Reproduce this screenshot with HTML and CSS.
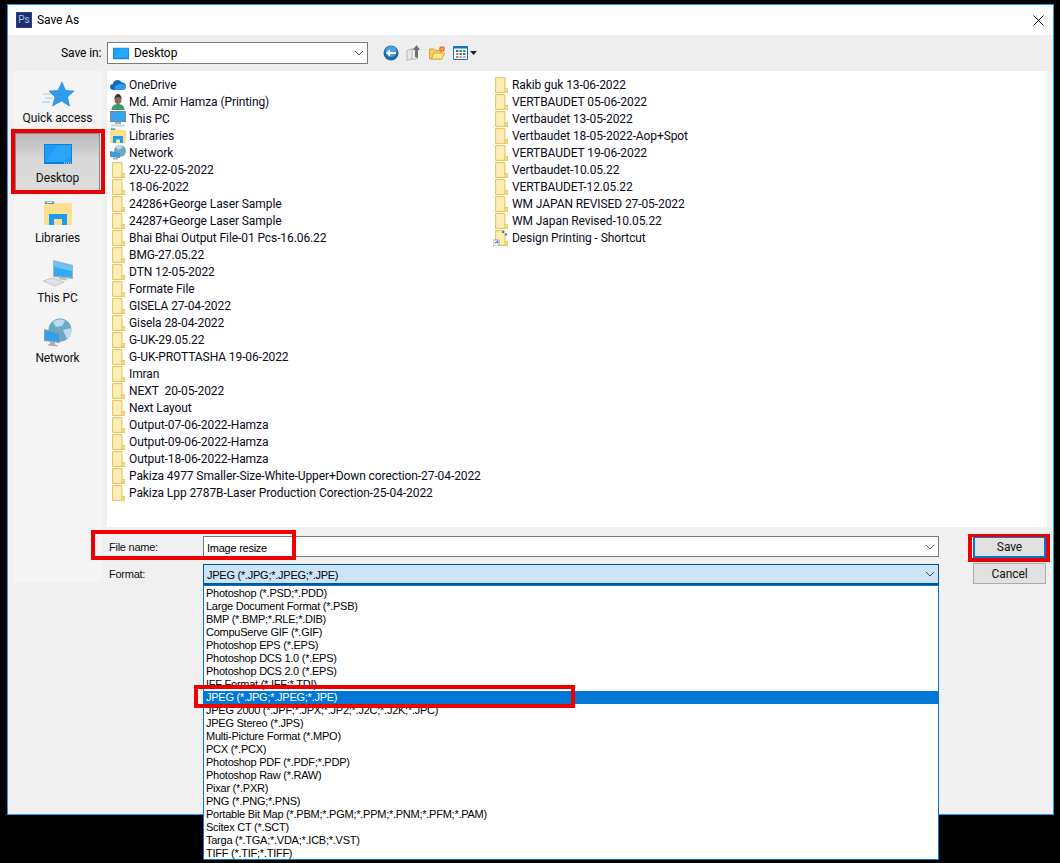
FILE: index.html
```html
<!DOCTYPE html>
<html lang="en">
<head>
<meta charset="utf-8">
<title>Save As</title>
<link rel="stylesheet" href="styles.css">
</head>
<body>
<svg class="defs" width="0" height="0" aria-hidden="true">
  <symbol id="folder" viewBox="0 0 16 16">
    <path d="M2.500.5h9.500v15H2.500z" fill="#fde08f" stroke="#e9c766"/>
    <path d="M3.500 1.500h7.500v13H3.500z" fill="#fdeeb8"/>
    <path d="M12 11.500h2.500v4H12z" fill="#fde08f" stroke="#e9c766"/>
  </symbol>
  <symbol id="monitor" viewBox="0 0 28 20">
    <path d="M0 0h28v20H0z" fill="#0f7fd8"/>
    <path d="M1 1h26v17H1z" fill="#1e9bf5"/>
    <path d="M14 1h13v12L17 18H1z" fill="#35aafa" opacity=".6"/>
    <path d="M20 18.600h1v.8h-1zM22 18.600h1v.8h-1zM24 18.600h1v.8h-1zM26 18.600h1v.8h-1z" fill="#fff"/>
  </symbol>
</svg>
<main class="window">
  <header class="titlebar">
    <span class="ps-logo">Ps</span>
    <span class="title">Save As</span>
    <svg class="close" width="11" height="11" viewBox="0 0 11 11"><path d="M.5.5l10 10M10.500.5l-10 10" stroke="#000" stroke-width="1" fill="none"/></svg>
  </header>

  <div class="toolbar">
    <span class="savein-label">Save in:</span>
    <div class="combo savein">
      <svg class="combo-icon" width="16" height="13"><use href="#monitor"/></svg>
      <span class="combo-text">Desktop</span>
      <svg class="chev" width="10" height="6" viewBox="0 0 10 6"><path d="M1 1l4 4 4-4" fill="none" stroke="#555" stroke-width="1"/></svg>
    </div>
    <div class="tools">
      <svg width="16" height="16" viewBox="0 0 16 16"><circle cx="8" cy="8" r="7.500" fill="#1c6aa8"/><circle cx="8" cy="6.500" r="5.500" fill="#4aa3df"/><path d="M3 8l4-3.500V7h6v2H7v2.500z" fill="#fff"/></svg>
      <svg width="16" height="18" viewBox="0 0 16 18"><path d="M1 6.500l6-2v10l-6 2z" fill="#e8e8e8" stroke="#b5b5b5"/><path d="M6 5h5v10H6z" fill="#eee" stroke="#b5b5b5"/><path d="M9 13V6H7l3.500-5L14 6h-2v8z" fill="#6f6f6f"/></svg>
      <svg width="17" height="14" viewBox="0 0 17 14"><path d="M.5 3h5l1 1.500h6v8.500H.5z" fill="#f3cf62" stroke="#d9a92f"/><path d="M2.500 13l2-6h11l-2.500 6z" fill="#fde68f" stroke="#d9a92f"/><circle cx="13" cy="3" r="2.800" fill="#ef5a2a"/><path d="M13 .5v5M10.500 3h5" stroke="#ffd27a" stroke-width=".8"/></svg>
      <svg class="views" width="15" height="14" viewBox="0 0 15 14"><path d="M.5.5h14v13H.5z" fill="#fff" stroke="#1a6fc4"/><path d="M.5.5h14v2H.5z" fill="#1a6fc4"/><path d="M3 4h2.500v2H3z" fill="#1a6fc4"/><path d="M6.500 4H9v2H6.500z" fill="#3a9a4a"/><path d="M10 4h2.500v2H10z" fill="#3a9a4a"/><path d="M3 7h2.500v2H3z" fill="#e07b2a"/><path d="M6.500 7H9v2H6.500z" fill="#6d7ea8"/><path d="M10 7h2.500v2H10z" fill="#2f7fc4"/><path d="M3 10h2.500v2H3z" fill="#e07b2a"/><path d="M6.500 10H9v2H6.500z" fill="#9aa7bf"/><path d="M10 10h2.500v2H10z" fill="#e0a52a"/></svg>
      <svg class="views-arrow" width="7" height="4" viewBox="0 0 7 4"><path d="M0 0h7L3.500 4z" fill="#222"/></svg>
    </div>
  </div>

  <div class="main">
    <nav class="sidebar">
      <div class="place">
        <svg class="place-icon" width="32" height="26" viewBox="0 0 32 26"><path d="M1 13h8M3 17h7M0 21h8" stroke="#8cc8f5" stroke-width="1.200"/><path d="M20 1l3.500 8.500 8.500.5-6.500 6 2 9-8-5-9 5 2.500-9-6-6 9-.5z" fill="#2d9cf0" stroke="#1b7fd0" stroke-width=".6"/></svg>
        <span>Quick access</span>
      </div>
      <div class="place is-current">
        <svg class="place-icon" width="28" height="20"><use href="#monitor"/></svg>
        <span>Desktop</span>
      </div>
      <div class="place">
        <svg class="place-icon place-icon-lib" width="28" height="25" viewBox="0 0 28 25"><path d="M0 1h10l2 2h16v22H0z" fill="#fde08f"/><path d="M1 1.500h9v2.500H1z" fill="#4aa3df"/><path d="M3 2h5v1H3z" fill="#fff"/><path d="M5 25V14h18v11h-5v-6h-8v6z" fill="#1e9bf5"/></svg>
        <span>Libraries</span>
      </div>
      <div class="place">
        <svg class="place-icon" width="32" height="28" viewBox="0 0 32 28"><path d="M11 1l20 5v14l-20-2z" fill="#9fb4c4"/><path d="M12 2.500l18 4.500v11.500l-18-1.800z" fill="#38a8f0"/><path d="M12 2.500l18 4.500v5L12 8z" fill="#6cc3f7"/><path d="M17 18.500l8 1v2l-8-1z" fill="#b8c2ca"/><path d="M1 22l9-3 12 4-9 4z" fill="#dfe3e6" stroke="#aab2b8" stroke-width=".6"/></svg>
        <span>This PC</span>
      </div>
      <div class="place">
        <svg class="place-icon" width="29" height="29" viewBox="0 0 29 29"><circle cx="17" cy="12" r="11.500" fill="#6ba9c9"/><path d="M10 4c4-3 9-3 12-1l-3 5-6 1zM20 12l8-2c1 5-1 9-4 11z" fill="#bcdcea"/><path d="M1 11l16 4v10l-16-2z" fill="#8d9aa5"/><path d="M2 12.500l14 3.500v7.500l-14-1.600z" fill="#2f9fee"/><path d="M7 24l5 .6v2l3 1v1l-10-1v-1l2-.5z" fill="#a4adb5"/></svg>
        <span>Network</span>
      </div>
    </nav>

    <div class="files">
      <ul class="col">
        <li><svg class="fi" width="16" height="11" viewBox="0 0 16 11"><path d="M3.500 11C1.500 11 0 9.700 0 8s1.200-2.800 2.800-3C3.400 2.600 5.400 1 7.700 1c1.800 0 3.300 1 4.100 2.500 2.300 0 4.200 1.700 4.200 3.900 0 2-1.500 3.600-3.600 3.600z" fill="#0f6cbd"/><path d="M5 11c-1.200-1.600-.3-4 2-4.500C8 5 9.700 4.300 11.500 5c2 0 4.500 1 4.500 3 0 2-1.500 3-3.600 3z" fill="#2f9cf0"/></svg>OneDrive</li>
        <li><svg class="fi" width="15" height="16" viewBox="0 0 15 16"><path d="M1 16c0-4 3-6 6.500-6s6.500 2 6.500 6z" fill="#3f9a6b"/><ellipse cx="7.500" cy="5.500" rx="3.500" ry="4.500" fill="#8a6a55"/><path d="M4 5c0-3 1.500-5 3.500-5S11 2 11 5c-1-1.500-2-2-3.500-2S5 3.500 4 5z" fill="#3a2f2a"/></svg>Md. Amir Hamza (Printing)</li>
        <li><svg class="fi" width="16" height="16" viewBox="0 0 16 16"><path d="M0 0h16v11H0z" fill="#6f8ba0"/><path d="M1 1h14v9H1z" fill="#3aa5ee"/><path d="M5 11h6v2H5z" fill="#9fb0bc"/><path d="M1 13.500h14v2H1z" fill="#c9d1d6"/></svg>This PC</li>
        <li><svg class="fi" width="16" height="15" viewBox="0 0 16 15"><path d="M0 0h6l1 2h9v13H0z" fill="#fde08f"/><path d="M1 .5h4V2H1z" fill="#2f9cf0"/><path d="M3 15V8h10v7h-3v-3.500H6V15z" fill="#1e9bf5"/></svg>Libraries</li>
        <li><svg class="fi" width="16" height="15" viewBox="0 0 16 15"><circle cx="10" cy="6" r="6" fill="#6ba9c9"/><path d="M6 2c2-2 5-2 7-1l-2 3-3 .5z" fill="#bcdcea"/><path d="M0 6l10 2v5l-10-1z" fill="#6f8ba0"/><path d="M1 7l8 1.800v3.400l-8-1z" fill="#2f9fee"/><path d="M3 13h5v1.500H3z" fill="#9fb0bc"/></svg>Network</li>
        <li><svg class="fi" width="16" height="16"><use href="#folder"/></svg>2XU-22-05-2022</li>
        <li><svg class="fi" width="16" height="16"><use href="#folder"/></svg>18-06-2022</li>
        <li><svg class="fi" width="16" height="16"><use href="#folder"/></svg>24286+George Laser Sample</li>
        <li><svg class="fi" width="16" height="16"><use href="#folder"/></svg>24287+George Laser Sample</li>
        <li><svg class="fi" width="16" height="16"><use href="#folder"/></svg>Bhai Bhai Output File-01 Pcs-16.06.22</li>
        <li><svg class="fi" width="16" height="16"><use href="#folder"/></svg>BMG-27.05.22</li>
        <li><svg class="fi" width="16" height="16"><use href="#folder"/></svg>DTN 12-05-2022</li>
        <li><svg class="fi" width="16" height="16"><use href="#folder"/></svg>Formate File</li>
        <li><svg class="fi" width="16" height="16"><use href="#folder"/></svg>GISELA 27-04-2022</li>
        <li><svg class="fi" width="16" height="16"><use href="#folder"/></svg>Gisela 28-04-2022</li>
        <li><svg class="fi" width="16" height="16"><use href="#folder"/></svg>G-UK-29.05.22</li>
        <li><svg class="fi" width="16" height="16"><use href="#folder"/></svg>G-UK-PROTTASHA 19-06-2022</li>
        <li><svg class="fi" width="16" height="16"><use href="#folder"/></svg>Imran</li>
        <li><svg class="fi" width="16" height="16"><use href="#folder"/></svg>NEXT&nbsp; 20-05-2022</li>
        <li><svg class="fi" width="16" height="16"><use href="#folder"/></svg>Next Layout</li>
        <li><svg class="fi" width="16" height="16"><use href="#folder"/></svg>Output-07-06-2022-Hamza</li>
        <li><svg class="fi" width="16" height="16"><use href="#folder"/></svg>Output-09-06-2022-Hamza</li>
        <li><svg class="fi" width="16" height="16"><use href="#folder"/></svg>Output-18-06-2022-Hamza</li>
        <li><svg class="fi" width="16" height="16"><use href="#folder"/></svg>Pakiza 4977 Smaller-Size-White-Upper+Down corection-27-04-2022</li>
        <li><svg class="fi" width="16" height="16"><use href="#folder"/></svg>Pakiza Lpp 2787B-Laser Production Corection-25-04-2022</li>
      </ul>
      <ul class="col">
        <li><svg class="fi" width="16" height="16"><use href="#folder"/></svg>Rakib guk 13-06-2022</li>
        <li><svg class="fi" width="16" height="16"><use href="#folder"/></svg>VERTBAUDET 05-06-2022</li>
        <li><svg class="fi" width="16" height="16"><use href="#folder"/></svg>Vertbaudet 13-05-2022</li>
        <li><svg class="fi" width="16" height="16"><use href="#folder"/></svg>Vertbaudet 18-05-2022-Aop+Spot</li>
        <li><svg class="fi" width="16" height="16"><use href="#folder"/></svg>VERTBAUDET 19-06-2022</li>
        <li><svg class="fi" width="16" height="16"><use href="#folder"/></svg>Vertbaudet-10.05.22</li>
        <li><svg class="fi" width="16" height="16"><use href="#folder"/></svg>VERTBAUDET-12.05.22</li>
        <li><svg class="fi" width="16" height="16"><use href="#folder"/></svg>WM JAPAN REVISED 27-05-2022</li>
        <li><svg class="fi" width="16" height="16"><use href="#folder"/></svg>WM Japan Revised-10.05.22</li>
        <li><svg class="fi" width="16" height="16" viewBox="0 0 16 16"><use href="#folder"/><path d="M9 1h2v2H9zM12 3.500h2v2h-2z" fill="#2f7fc4"/><path d="M0 10h6v6H0z" fill="#fff" stroke="#8a98a8" stroke-width=".8"/><path d="M1.500 14.500c0-2 1-3 2.500-3V10.500L5.500 12 4 13.500v-1c-1 0-2 .7-2.500 2z" fill="#1b5fa8"/></svg>Design Printing - Shortcut</li>
      </ul>
    </div>
  </div>

  <div class="form">
    <div class="form-row">
      <label class="form-label">File name:</label>
      <div class="combo field"><span class="combo-text">Image resize</span>
        <svg class="chev" width="10" height="6" viewBox="0 0 10 6"><path d="M1 1l4 4 4-4" fill="none" stroke="#555" stroke-width="1"/></svg>
      </div>
      <button class="btn btn-default">Save</button>
    </div>
    <div class="form-row form-row-2">
      <label class="form-label form-label-2">Format:</label>
      <div class="combo field field-open"><span class="combo-text">JPEG (*.JPG;*.JPEG;*.JPE)</span>
        <svg class="chev" width="10" height="6" viewBox="0 0 10 6"><path d="M1 1l4 4 4-4" fill="none" stroke="#444" stroke-width="1"/></svg>
      </div>
      <button class="btn btn-cancel">Cancel</button>
    </div>
  </div>

  <ul class="dropdown">
    <li>Photoshop (*.PSD;*.PDD)</li>
    <li>Large Document Format (*.PSB)</li>
    <li>BMP (*.BMP;*.RLE;*.DIB)</li>
    <li>CompuServe GIF (*.GIF)</li>
    <li>Photoshop EPS (*.EPS)</li>
    <li>Photoshop DCS 1.0 (*.EPS)</li>
    <li>Photoshop DCS 2.0 (*.EPS)</li>
    <li>IFF Format (*.IFF;*.TDI)</li>
    <li class="selected">JPEG (*.JPG;*.JPEG;*.JPE)</li>
    <li>JPEG 2000 (*.JPF;*.JPX;*.JP2;*.J2C;*.J2K;*.JPC)</li>
    <li>JPEG Stereo (*.JPS)</li>
    <li>Multi-Picture Format (*.MPO)</li>
    <li>PCX (*.PCX)</li>
    <li>Photoshop PDF (*.PDF;*.PDP)</li>
    <li>Photoshop Raw (*.RAW)</li>
    <li>Pixar (*.PXR)</li>
    <li>PNG (*.PNG;*.PNS)</li>
    <li>Portable Bit Map (*.PBM;*.PGM;*.PPM;*.PNM;*.PFM;*.PAM)</li>
    <li>Scitex CT (*.SCT)</li>
    <li>Targa (*.TGA;*.VDA;*.ICB;*.VST)</li>
    <li>TIFF (*.TIF;*.TIFF)</li>
  </ul>

  <div class="mark mark-desktop"></div>
  <div class="mark mark-filename"></div>
  <div class="mark mark-save"></div>
  <div class="mark mark-jpeg"></div>
</main>
</body>
</html>
```
FILE: styles.css
```css
* { box-sizing: border-box; }
html, body { margin: 0; padding: 0; }
body {
  width: 1060px;
  height: 863px;
  overflow: hidden;
  background: #000;
  font-family: "Roboto", "Liberation Sans", sans-serif;
  font-size: 12px;
  letter-spacing: -.09px;
  color: #000;
}
.defs { position: absolute; }
ul { list-style: none; margin: 0; padding: 0; }

.window {
  position: relative;
  width: 1047px;
  height: 811px;
  margin: 4px 0 0 7px;
  border: 1px solid #1e9bf0;
  background: #f0f0f0;
  display: flex;
  flex-direction: column;
}

.titlebar {
  height: 30px;
  flex: none;
  background: #fff;
  display: flex;
  align-items: center;
  padding: 0 9px 0 8px;
}
.ps-logo {
  width: 16px;
  height: 16px;
  background: #1f2d6b;
  border: 1px solid #2a3f86;
  color: #9ec3ee;
  font-size: 10px;
  line-height: 14px;
  text-align: center;
  margin-right: 5px;
}
.title { flex: 1; }

.toolbar {
  height: 36px;
  flex: none;
  display: flex;
  align-items: center;
  padding-left: 53px;
  background: #eeeeee;
}
.savein-label { width: 46px; }
.combo {
  height: 22px;
  background: #fff;
  border: 1px solid #7a7a7a;
  display: flex;
  align-items: center;
  padding: 0 3px 0 5px;
}
.savein { width: 261px; }
.combo-icon { margin-right: 5px; }
.combo-text { flex: 1; }
.tools {
  display: flex;
  align-items: center;
  margin-left: 15px;
  gap: 7px;
}
.views-arrow { margin-left: -5px; }

.main {
  height: 456px;
  flex: none;
  display: flex;
  position: relative;
  padding-left: 6px;
  gap: 6px;
}
.sidebar {
  width: 87px;
  height: 511px;
  flex: none;
  background: #f4f4f4;
  padding-top: 1px;
}
.place {
  height: 60px;
  display: flex;
  flex-direction: column;
  align-items: center;
  justify-content: flex-end;
  padding-bottom: 7px;
  color: #111;
}
.place-icon { margin-bottom: 4px; }
.place-icon-lib { margin-bottom: 6px; }
.is-current {
  width: 85px;
  height: 58px;
  margin: 1px 1px;
  border: 1px solid #8a8a8a;
  padding-bottom: 5px;
  background: linear-gradient(#b9b9b9, #d8d8d8 45%, #dcdcdc);
}
.is-current .place-icon { margin-bottom: 7px; }

.files {
  width: 940px;
  flex: none;
  background: #fff;
  display: flex;
  padding: 5px 0 0 3px;
}
.col { width: 383px; flex: none; }
.col li {
  height: 17px;
  display: flex;
  align-items: center;
  white-space: nowrap;
  color: #0a0a1a;
}
.fi { width: 16px; flex: none; margin-right: 3px; }

.form {
  flex: 1;
  padding-top: 9px;
}
.form-row {
  display: flex;
  align-items: flex-start;
  padding-left: 101px;
}
.form-row-2 { margin-top: 5px; }
.form-label,
.field,
.dropdown {
  font-family: "Liberation Sans", sans-serif;
  font-size: 11px;
  letter-spacing: -.25px;
}
.form-label { width: 94px; line-height: 23px; color: #111; }
.form-label-2 { line-height: 21px; }
.field {
  width: 736px;
  height: 21px;
  padding-left: 3px;
}
.field .combo-text { padding-top: 2px; }
.field-open {
  background: #cce4f7;
  border: 1px solid #005499;
  border-bottom-width: 2px;
}
.btn {
  width: 73px;
  height: 21px;
  margin-left: 34px;
  background: #e1e1e1;
  border: 1px solid #adadad;
  padding: 0;
  font: inherit;
  letter-spacing: inherit;
  color: #111;
}
.btn-default { height: 22px; border: 2px solid #0078d7; }
.btn-cancel { margin-top: -1px; }

.dropdown {
  position: absolute;
  left: 195px;
  top: 580px;
  width: 736px;
  height: 275px;
  background: #fff;
  border: 1px solid #0078d7;
  padding-top: 1px;
  overflow: hidden;
}
.dropdown li {
  height: 13px;
  line-height: 13px;
  padding-left: 2px;
  white-space: nowrap;
}
.dropdown .selected { background: #0078d7; color: #fff; }

.mark { position: absolute; border: 4px solid #ee0000; }
.mark-desktop { left: 3px; top: 124px; width: 94px; height: 65px; }
.mark-filename { left: 83px; top: 525px; width: 205px; height: 30px; }
.mark-save { left: 960px; top: 529px; width: 82px; height: 28px; border-top-width: 3px; }
.mark-jpeg { left: 186px; top: 680px; width: 381px; height: 23px; }
```
